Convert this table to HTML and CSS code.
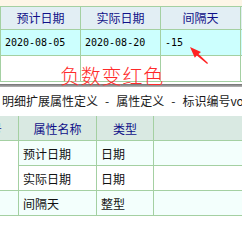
FILE: index.html
```html
<!DOCTYPE html>
<html lang="zh">
<head>
<meta charset="utf-8">
<link rel="stylesheet" href="styles.css">
</head>
<body>
<div class="shot shot-top">
  <div class="cream"></div>
  <div class="grid grid-top">
    <div class="th">预计日期</div>
    <div class="th">实际日期</div>
    <div class="th">间隔天</div>
    <div class="th"></div>
    <div class="td hl num">2020-08-05</div>
    <div class="td hl num">2020-08-20</div>
    <div class="td hl num">-15</div>
    <div class="td hl"></div>
    <div class="td"></div>
    <div class="td"></div>
    <div class="td"></div>
    <div class="td"></div>
  </div>
  <div class="edge"></div>
  <div class="note">负数变红色</div>
  <svg class="arrow" width="30" height="24" viewBox="0 0 30 24">
    <path d="M2 1 L13 6 L10.5 8 L20 17 L19.2 18 L8.8 9.5 L6.8 11.8 Z" fill="#ff2222"/>
  </svg>
</div>
<div class="shot shot-bottom">
  <div class="crumb">明细扩展属性定义<span class="sep">-</span>属性定义<span class="sep">-</span>标识编号vo</div>
  <div class="clip">
    <div class="grid grid-bot">
      <div class="bh">序号</div>
      <div class="bh">属性名称</div>
      <div class="bh">类型</div>
      <div class="bh"></div>
      <div class="bd c0 span2"></div>
      <div class="bd alt">预计日期</div>
      <div class="bd alt">日期</div>
      <div class="bd alt"></div>
      <div class="bd">实际日期</div>
      <div class="bd">日期</div>
      <div class="bd"></div>
      <div class="bd alt"></div>
      <div class="bd alt">间隔天</div>
      <div class="bd alt">整型</div>
      <div class="bd alt"></div>
    </div>
  </div>
</div>
</body>
</html>
```
FILE: styles.css
```css
html, body {
  margin: 0;
  padding: 0;
  background: #ffffff;
}
body {
  width: 242px;
  height: 244px;
  overflow: hidden;
  font-family: "Noto Sans CJK SC", "Liberation Sans", sans-serif;
  font-size: 12px;
  color: #111;
}
.shot {
  position: relative;
  overflow: hidden;
}
.shot-top {
  height: 87px;
}
.cream {
  height: 6px;
  background: #fdf6e7;
}
.grid {
  display: grid;
  gap: 1px;
  background: #a4d0a2;
}
.grid-top {
  grid-template-columns: 79px 79px 79px 40px;
  grid-template-rows: 22px 25px 25px;
  padding: 1px 0 1px 1px;
  width: 300px;
}
.th {
  background: #e2eef4;
  color: #101088;
  display: flex;
  align-items: center;
  justify-content: center;
  line-height: 1;
}
.td {
  background: #ffffff;
  display: flex;
  align-items: center;
  padding-left: 4px;
}
.td.hl {
  background: #ccfffe;
}
.num {
  font-family: "DejaVu Sans Mono", "Liberation Mono", monospace;
  font-size: 10px;
  color: #000;
}
.edge {
  height: 3px;
  margin-top: 2px;
  background: linear-gradient(#6f6f6f, #b8b8b8);
}
.note {
  position: absolute;
  left: 60px;
  top: 64px;
  font-size: 20px;
  line-height: 24px;
  color: #ff2a2a;
  font-weight: 300;
  letter-spacing: 0.8px;
}
.arrow {
  position: absolute;
  left: 188px;
  top: 46px;
}
.crumb {
  height: 29px;
  line-height: 27px;
  padding-left: 2px;
  white-space: nowrap;
  color: #1a1a1a;
  font-size: 12px;
}
.sep {
  margin: 0 7px;
}
.clip {
  overflow: hidden;
}
.grid-bot {
  grid-template-columns: 56px 77px 56px 120px;
  grid-template-rows: 24px 24px 24px 24px;
  padding-bottom: 1px;
  margin-left: -38px;
  width: 312px;
}
.bh {
  background: #d9e9e2;
  color: #101088;
  display: flex;
  align-items: center;
  justify-content: center;
}
.bd {
  background: #ffffff;
  display: flex;
  align-items: center;
  padding-left: 4px;
  color: #111;
}
.bd.alt {
  background: #f3fffc;
}
.span2 {
  grid-row: span 2;
}
```
